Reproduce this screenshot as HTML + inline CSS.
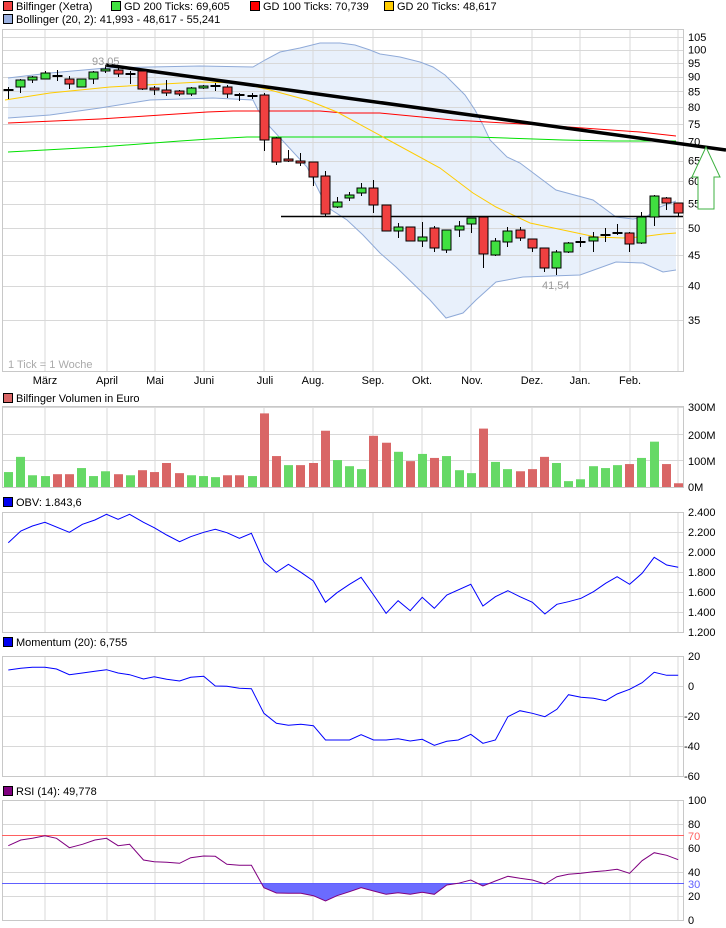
<!DOCTYPE html>
<html><head><meta charset="utf-8"><style>
html,body{margin:0;padding:0;background:#fff;}
svg{display:block;font-family:"Liberation Sans",Arial,sans-serif;font-size:11px;}
</style></head><body>
<svg id="s" width="726" height="928" xmlns="http://www.w3.org/2000/svg"></svg>
<script>
var s=document.getElementById('s'),h='';
function X(i){return 8+i*12.18;}
function L(x1,y1,x2,y2,c,w){h+='<line x1="'+x1+'" y1="'+y1+'" x2="'+x2+'" y2="'+y2+'" stroke="'+c+'" stroke-width="'+(w||1)+'"/>';}
function T(x,y,t,c,a){h+='<text x="'+x+'" y="'+y+'" fill="'+(c||'#000')+'"'+(a?' text-anchor="'+a+'"':'')+'>'+t+'</text>';}
function R(x,y,w,hh,f,st){h+='<rect x="'+x+'" y="'+y+'" width="'+w+'" height="'+hh+'" fill="'+f+'"'+(st?' stroke="'+st+'"':'')+'/>';}
function P(pts,c,w,f){h+='<polyline points="'+pts.map(function(p){return p[0]+','+p[1]}).join(' ')+'" fill="'+(f||'none')+'" stroke="'+c+'" stroke-width="'+(w||1)+'"/>';}
var G='#d8d8d8',B='#c8c8c8';
var vx=[45,107,155,204,264,313,373,422,471,532,580,630,678];
function panel(t,b,hl){hl.forEach(function(y){L(2,y,684,y,G);});vx.forEach(function(x){L(x,t,x,b,G);});h+='<rect x="2.5" y="'+t+'.5" width="681" height="'+(b-t)+'" fill="none" stroke="'+B+'"/>';}
// legend
R(3.5,1.5,9,9,'#f04040','#000');T(16,10,'Bilfinger (Xetra)');
R(111.5,1.5,9,9,'#40e040','#000');T(124,10,'GD 200 Ticks: 69,605');
R(250.5,1.5,9,9,'#ff0000','#000');T(263,10,'GD 100 Ticks: 70,739');
R(384.5,1.5,9,9,'#ffcc00','#000');T(397,10,'GD 20 Ticks: 48,617');
R(3.5,14.5,9,9,'#9ab0e0','#000');T(16,23,'Bollinger (20, 2): 41,993 - 48,617 - 55,241');
// main
var up=[[8,78],[50,73],[106,68],[150,67],[200,66],[253,67],[265,60],[280,52],[300,48],[320,43],[340,43],[355,45],[370,50],[380,54],[400,57],[420,62],[433,67],[445,75],[455,85],[465,95],[475,110],[483,125],[490,140],[507,157],[520,163],[556,190],[593,200],[616,217],[633,219],[646,217],[660,207],[676,201]];
var lo=[[8,118],[50,115],[100,108],[150,100],[213,98],[253,100],[258,110],[270,127],[307,167],[327,207],[347,220],[363,235],[380,253],[396,267],[430,300],[446,318],[463,313],[476,300],[496,282],[523,277],[580,275],[616,262],[643,263],[663,272],[676,270]];
var py=[[105,37],[100,49.6],[95,62.8],[90,76.7],[85,91.4],[80,107],[75,123.8],[70,141.5],[65,160.6],[60,181],[55,203.6],[50,228],[45,255],[40,285.6],[35,320]];
h+='<polygon points="'+up.concat(lo.slice().reverse()).map(function(p){return p[0]+','+p[1]}).join(' ')+'" fill="#e8f0fb"/>';
panel(29,371,py.map(function(p){return Math.round(p[1])+.5;}));
py.forEach(function(p){T(688,p[1]+4,p[0]);});
P(up,'#8faad8');P(lo,'#8faad8');
P([[8,123],[100,119],[207,112],[233,111],[320,111],[343,113],[380,113],[453,120],[540,125],[640,132],[676,136]],'#ff0000');
P([[8,152],[100,147],[180,141],[210,139],[247,137],[380,137],[476,137],[563,140],[613,141],[676,141]],'#00e000');
P([[5,100],[50,93],[110,87],[200,82],[240,83],[270,90],[307,100],[337,112],[383,137],[440,168],[473,193],[496,207],[530,223],[596,237],[623,238],[640,237],[663,234],[676,233]],'#ffcc00');
var cd=[[87,99,89,91,'d'],[79,93,80,87,'g'],[76,83,77,80,'g'],[71,79,73,79,'g'],[70,81,75,77,'d'],[76,89,79,84,'r'],[79,87,79,87,'g'],[71,84,72,79,'g'],[65,73,69,71,'g'],[68,77,70,74,'r'],[71,84,73,75,'d'],[71,90,71,89,'r'],[86,95,88,90,'r'],[80,96,90,93,'r'],[90,96,91,94,'r'],[87,96,88,94,'g'],[85,89,86,88,'g'],[83,91,85,87,'d'],[85,98,87,94,'r'],[93,101,94,96,'d'],[93,99,95,97,'d'],[93,151,95,140,'r'],[137,165,138,162,'r'],[150,162,159,161,'r'],[153,166,161,163,'r'],[162,186,162,177,'r'],[171,216,176,214,'r'],[197,208,202,207,'g'],[192,201,195,198,'g'],[183,196,188,193,'g'],[180,213,188,205,'r'],[205,231,205,231,'r'],[223,238,227,231,'g'],[227,241,227,241,'r'],[222,247,237,241,'g'],[226,252,228,248,'r'],[230,253,230,250,'g'],[221,237,226,230,'g'],[218,233,218,224,'g'],[217,268,217,254,'r'],[238,256,241,255,'g'],[227,247,231,242,'g'],[227,241,230,238,'r'],[239,252,239,248,'r'],[248,272,248,268,'r'],[250,275,252,268,'g'],[242,253,243,252,'g'],[237,247,241,243,'d'],[232,252,237,241,'g'],[228,242,234,236,'d'],[224,235,232,234,'d'],[232,252,233,244,'r'],[212,244,217,243,'g'],[195,226,196,217,'g'],[197,210,198,203,'r'],[203,217,203,213,'r']];
L(281,216.5,683,216.5,'#000',1.5);
L(106,65,726,150,'#000',3.5);
cd.forEach(function(c,i){var x=Math.round(X(i))+.5;L(x,c[0],x,c[1],'#000');
 if(c[4]=='d'){L(x-5,(c[2]+c[3])/2,x+5,(c[2]+c[3])/2,'#000',2);}
 else R(x-4.5,c[2],9,Math.max(c[3]-c[2],2),c[4]=='r'?'#f04040':'#40e040','#000');});
h+='<polygon points="706,147 692,177 698,177 698,209 714,209 714,177 720,177" fill="#fff" stroke="#3cb040" stroke-width="1"/>';
T(92,65,'93,05','#999');T(542,289,'41,54','#999');
T(8,368,'1 Tick = 1 Woche','#aaa');
[['März',45],['April',107],['Mai',155],['Juni',204],['Juli',265],['Aug.',313],['Sep.',373],['Okt.',422],['Nov.',472],['Dez.',532],['Jan.',580],['Feb.',630]].forEach(function(m){T(m[1],384,m[0],'#000','middle');});
// volume
R(3.5,393.5,9,9,'#d96666','#000');T(16,402,'Bilfinger Volumen in Euro');
panel(406,487,[407.5,434.5,460.5]);
[['300M',411],['200M',439],['100M',465],['0M',491]].forEach(function(l){T(688,l[1],l[0]);});
var vol=[[56,1],[113,1],[44,1],[41,1],[48,0],[48,0],[71,1],[41,1],[59,1],[48,0],[44,1],[63,0],[56,0],[90,0],[52,0],[44,1],[41,1],[37,1],[44,0],[44,0],[41,1],[276,0],[116,0],[82,1],[82,0],[90,0],[211,0],[101,1],[78,1],[67,1],[192,0],[166,0],[132,1],[97,0],[124,1],[109,0],[116,1],[63,1],[52,1],[219,0],[94,1],[67,1],[59,0],[67,0],[113,0],[90,1],[22,1],[29,1],[78,1],[71,1],[82,1],[86,0],[109,1],[170,1],[86,0],[14,0]];
vol.forEach(function(v,i){var hh=v[0]*0.2667;R(Math.round(X(i))-4,487-hh,9,hh,v[1]?'#66d966':'#d96666');});
function sc(a,yo){return a.map(function(p){return [(p[0]/2.16).toFixed(1),(yo+p[1]/3).toFixed(1)];});}
// OBV
R(3.5,497.5,9,9,'#0000ee','#000');T(16,506,'OBV: 1.843,6');
panel(512,632,[512.5,532.5,552.5,572.5,592.5,612.5]);
['2.400','2.200','2.000','1.800','1.600','1.400','1.200'].forEach(function(t,i){T(688,516+i*20,t);});
P(sc([[18,143],[45,108],[70,93],[97,82],[150,112],[178,88],[205,75],[230,58],[255,73],[280,58],[310,82],[333,98],[360,120],[388,140],[412,125],[440,112],[465,103],[490,113],[517,130],[543,115],[570,200],[597,232],[623,208],[650,232],[677,258],[703,322],[728,293],[755,268],[780,247],[807,300],[834,355],[860,317],[886,347],[912,307],[938,340],[965,300],[1017,268],[1043,333],[1070,305],[1097,287],[1123,305],[1150,322],[1177,357],[1203,328],[1228,320],[1255,310],[1282,290],[1308,265],[1333,245],[1360,268],[1387,235],[1413,187],[1440,210],[1465,217]],495),'#0000ff');
// Momentum
R(3.5,637.5,9,9,'#0000ee','#000');T(16,646,'Momentum (20): 6,755');
panel(656,776,[686.5,716.5,746.5]);
[['20',660,688],['0',690,688],['-20',720,684],['-40',750,684],['-60',780,684]].forEach(function(l){T(l[2],l[1],l[0]);});
P(sc([[18,90],[45,85],[70,82],[97,82],[122,87],[150,104],[178,99],[205,94],[230,89],[255,99],[280,104],[310,117],[333,110],[360,118],[388,123],[412,112],[440,109],[465,138],[490,139],[517,145],[543,146],[570,220],[597,250],[623,256],[650,253],[677,257],[703,300],[728,300],[755,300],[780,284],[807,300],[834,300],[860,296],[886,303],[912,298],[938,316],[965,304],[990,300],[1017,283],[1043,310],[1070,300],[1097,230],[1123,212],[1150,220],[1177,230],[1203,208],[1228,164],[1255,172],[1282,175],[1308,182],[1333,162],[1360,148],[1387,128],[1413,97],[1440,106],[1465,106]],640),'#0000ff');
// RSI
R(3.5,786.5,9,9,'#800080','#000');T(16,795,'RSI (14): 49,778');
panel(800,920,[824.5,848.5,872.5,896.5]);
var rsi=sc([[18,182],[45,165],[70,160],[97,152],[122,160],[150,188],[178,178],[205,165],[230,160],[255,182],[280,178],[310,225],[333,230],[360,232],[388,235],[412,218],[440,213],[465,214],[490,238],[517,241],[543,241],[570,308],[597,324],[623,325],[650,325],[677,332],[703,348],[728,332],[755,320],[780,308],[807,318],[834,328],[860,323],[886,328],[912,322],[938,328],[965,300],[990,295],[1017,285],[1043,303],[1070,288],[1097,274],[1123,280],[1150,285],[1177,297],[1203,275],[1228,268],[1255,265],[1282,260],[1308,257],[1333,253],[1360,265],[1387,227],[1413,203],[1440,211],[1465,224]],785);
h+='<clipPath id="cp"><rect x="0" y="883.7" width="726" height="40"/></clipPath>';
h+='<polygon clip-path="url(#cp)" points="8,883.7 '+rsi.map(function(p){return p[0]+','+p[1]}).join(' ')+' 678,883.7" fill="#6b6bff"/>';
L(2,835.5,684,835.5,'#ff6060');L(2,883.5,684,883.5,'#6060ff');
P(rsi,'#800080');
[['100',804],['80',828],['60',852],['40',876],['20',900],['0',924]].forEach(function(l){T(688,l[1],l[0]);});
T(688,840,'70','#ff6060');T(688,888,'30','#6060ff');
s.innerHTML=h;
</script>
</body></html>
